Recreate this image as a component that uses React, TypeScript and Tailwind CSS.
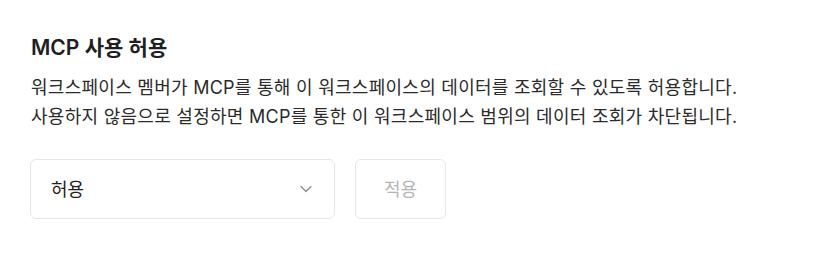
import React from "react";

export default function App() {
  return (
    <div
      className="w-[828px] h-[270px] bg-white pl-[31px] pt-[33px]"
      style={{ fontFamily: "Inter, 'Noto Sans CJK KR', sans-serif" }}
    >
      <h2 className="text-[21px] leading-[30px] font-semibold text-[#1f1f1f]">MCP 사용 허용</h2>
      <p className="mt-[10px] text-[18px] leading-[29px] tracking-[0.015em] text-[#2b2b2b]">
        워크스페이스 멤버가 MCP를 통해 이 워크스페이스의 데이터를 조회할 수 있도록 허용합니다.
        <br />
        사용하지 않음으로 설정하면 MCP를 통한 이 워크스페이스 범위의 데이터 조회가 차단됩니다.
      </p>
      <div className="mt-[28px] flex gap-[20px] -ml-[1px]">
        <div className="w-[305px] h-[60px] rounded-[6px] border border-[#e6e6e6] flex items-center justify-between pl-[20px] pr-[22px]">
          <span className="text-[18px] text-[#1f1f1f]">허용</span>
          <svg width="12" height="8" viewBox="0 0 12 8" fill="none">
            <path d="M1 1.5L6 6.5L11 1.5" stroke="#888" strokeWidth="1.2" strokeLinecap="round" strokeLinejoin="round" />
          </svg>
        </div>
        <button className="w-[91px] h-[60px] rounded-[6px] border border-[#e6e6e6] text-[18px] text-[#b5b5b5] bg-white">
          적용
        </button>
      </div>
    </div>
  );
}
